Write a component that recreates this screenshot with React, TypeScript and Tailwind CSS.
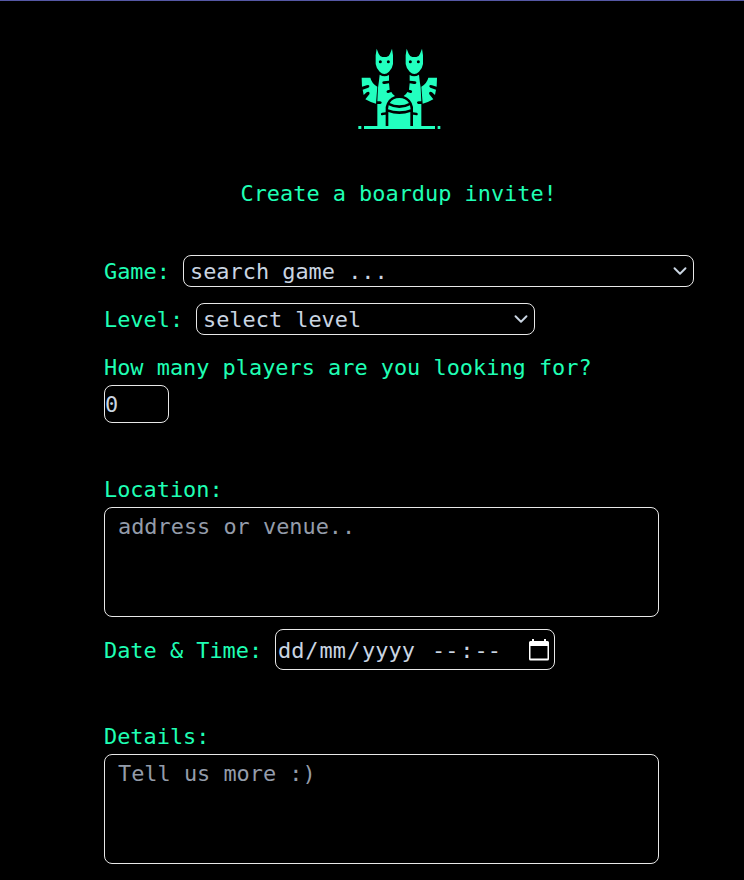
import { ChevronDown } from "lucide-react";

const field = "rounded-lg border border-[#e8e8e8] bg-black text-slate-300";

function HydraLogo() {
  return (
    <svg viewBox="0 0 300 300" className="size-[100px]" fill="#22ffbf">
      {[0, 90].map((x) => (
        <g key={x} transform={`translate(${x} 0)`}>
          <path d="M80 26 L86 41 Q90 50 97 51 H109 Q117 50 120 41 L126 26 L129 46 V72 Q128 83 117 95 Q110 102 103 102 Q96 102 89 95 Q78 83 77 72 V46Z" />
          <circle cx="91" cy="65" r="4.500" fill="#000" />
          <circle cx="115" cy="65" r="4.500" fill="#000" />
        </g>
      ))}
      {["", "translate(296 0) scale(-1 1)"].map((t) => (
        <g key={t} transform={t}>
          <path d="M89 104 Q103 113 117 105 V122 L101 124 Q96 125 97 129 Q98 133 104 132 L117 130 L119 149 L113 151 Q108 153 110 157 Q112 160 117 158 L124 156 Q127 163 135 168 Q112 176 107 201 V217 L96 218 Q91 220 93 224 Q95 227 100 225 L107 224 V258 H82 V192 H91 Q96 191 95 187 Q94 184 89 184 H82 L84 143 Q87 124 89 104Z" />
          <path d="M35 113 H61 Q65 130 82 140 L78 191 Q61 187 46 178 L58 163 Q60 158 57 156 Q54 154 50 157 L41 165 L38 149 L55 143 Q59 140 58 137 Q56 134 50 136 L36 140 Z" />
        </g>
      ))}
      <path d="M119 189 Q129 174 148 174 Q167 174 177 189 Q165 196 148 196 Q131 196 119 189Z" />
      <path d="M116 196 Q130 204 148 204 Q166 204 180 196 L182 208 Q168 214 148 214 Q128 214 114 208Z" />
      <path d="M115 216 Q130 222 148 222 Q166 222 181 216 V259 H115Z" />
      <path d="M42 258 H255 V267 H42Z M25 258 H34 V267 H25Z M263 258 H271 V267 H263Z" />
    </svg>
  );
}

export default function App() {
  return (
    <main className="h-[880px] overflow-hidden border-t border-[#5558a5] bg-black pl-[104px] font-['DejaVu_Sans_Mono',monospace] text-[21.9px] leading-8 text-[#1fffb4]">
      <div className="mt-[39px] ml-[246px]">
        <HydraLogo />
      </div>
      <h1 className="mt-[38px] ml-[136.5px]">Create a boardup invite!</h1>

      <div className="mt-[45px] flex h-8">
        <label className="w-[79px] pt-px">Game:</label>
        <div className={`${field} flex w-[511px] items-center justify-between pr-0.5 pl-1.5`}>
          <span className="pt-px">search game ...</span>
          <ChevronDown size={22} strokeWidth={2.1} />
        </div>
      </div>

      <div className="mt-4 flex h-8">
        <label className="w-[92px] pt-px">Level:</label>
        <div className={`${field} flex w-[339px] items-center justify-between pr-0.5 pl-1.5`}>
          <span className="pt-px">select level</span>
          <ChevronDown size={22} strokeWidth={2.1} />
        </div>
      </div>

      <label className="mt-4 block h-[34px] pt-px">How many players are you looking for?</label>
      <input defaultValue="0" className={`${field} block h-[38px] w-[65px] outline-none`} />

      <label className="mt-[50px] block h-[34px] pt-px">Location:</label>
      <textarea
        placeholder="address or venue.."
        className={`${field} block h-[110px] w-[555px] resize-none px-[13px] py-[3px] placeholder:text-[#949caa]`}
      />

      <div className="mt-3 flex h-[41px] items-center">
        <label className="w-[171px] pt-0.5">Date &amp; Time:</label>
        <div className={`${field} flex h-full w-[280px] items-center justify-between pr-[5px] pl-px`}>
          <div className="flex pt-0.5 whitespace-pre">
            <span className="px-px">dd</span>/
            <span className="px-px">mm</span>/
            <span className="pr-[3px] pl-0.5">yyyy</span>
            <span>{" "}</span>
            <span className="pr-0.5 pl-px">--</span>:
            <span className="px-px">--</span>
          </div>
          <svg viewBox="0 0 20 22" className="h-[22px] w-5" fill="#fff">
            <path fillRule="evenodd" d="M3 0h2v2h10V0h2v2h1.500q1.500 0 1.500 1.500V20q0 1.500-1.500 1.500h-17Q0 21.500 0 20V3.500Q0 2 1.500 2H3ZM1.500 7v12.500h17V7Z" />
          </svg>
        </div>
      </div>

      <label className="mt-[50px] block h-[34px] pt-px">Details:</label>
      <textarea
        placeholder="Tell us more :)"
        className={`${field} block h-[110px] w-[555px] resize-none px-[13px] py-[3px] placeholder:text-[#949caa]`}
      />
    </main>
  );
}
